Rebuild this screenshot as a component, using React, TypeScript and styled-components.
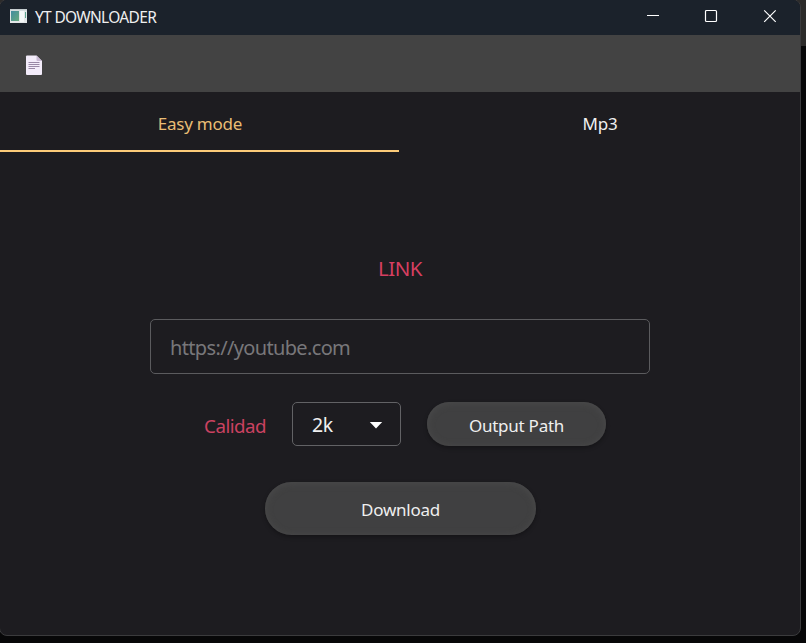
import React from 'react';
import styled, { createGlobalStyle } from 'styled-components';

const GlobalStyle = createGlobalStyle`
  * { box-sizing: border-box; }
  body {
    margin: 0;
    background: #070708;
    font-family: 'Noto Sans', 'Open Sans', sans-serif;
    overflow: hidden;
  }
`;

const Desktop = styled.div`
  width: 806px;
  height: 643px;
  overflow: hidden;
  background: linear-gradient(#2c2b2a 0 46px, #070708 46px);
`;

const Window = styled.main`
  width: 802px;
  height: 637px;
  margin: -1px 0 0 -1px;
  display: flex;
  flex-direction: column;
  overflow: hidden;
  background: #1d1c20;
  border: 1px solid #3b3b3d;
  border-radius: 8px;
`;

const Text = styled.span<{ $size: number; $spacing: number; $color?: string; $shift?: number }>`
  font-size: ${p => p.$size}px;
  letter-spacing: ${p => p.$spacing}px;
  color: ${p => p.$color ?? '#efefef'};
  line-height: 24px;
  white-space: nowrap;
  padding-top: ${p => p.$shift ?? 0}px;
`;

const TitleBar = styled.header`
  height: 35px;
  flex: none;
  display: flex;
  align-items: center;
  padding: 0 22px 3px 9px;
  background: #1b222b;
`;

const AppIcon = styled.svg`
  width: 19px;
  height: 16px;
  margin-right: 7px;
`;

const WindowControls = styled.div`
  display: flex;
  gap: 42px;
  margin-left: auto;
`;

const ControlIcon = styled.svg`
  width: 17px;
  height: 16px;
  fill: none;
  stroke: #fff;
`;

const Toolbar = styled.nav`
  height: 57px;
  flex: none;
  display: flex;
  align-items: center;
  padding: 3px 0 0 25px;
  background: #434343;
`;

const DocumentIcon = styled.svg`
  width: 18px;
  height: 21px;
`;

const Tabs = styled.div`
  display: grid;
  grid-template-columns: 399px 401px;
  height: 60px;
  flex: none;
`;

const Tab = styled.button<{ $active?: boolean }>`
  display: flex;
  align-items: center;
  justify-content: center;
  padding: 6px 0 0 1px;
  border: 0;
  border-bottom: 2px solid ${p => (p.$active ? '#fccb79' : 'transparent')};
  background: none;
  font-family: inherit;
`;

const Form = styled.section`
  display: flex;
  flex-direction: column;
  align-items: center;
  padding-top: 104px;
`;

const LinkInput = styled.input`
  width: 500px;
  height: 55px;
  margin-top: 39px;
  padding: 1px 19px 0;
  border: 1px solid #5b5b5e;
  border-radius: 5px;
  background: transparent;
  color: #f3f3f3;
  font-family: inherit;
  font-size: 20px;
  letter-spacing: -0.65px;
  &::placeholder { color: #78777a; opacity: 1; }
`;

const OptionsRow = styled.div`
  display: flex;
  align-items: center;
  justify-content: flex-end;
  width: 402px;
  height: 44px;
  margin: 28px 0 0 10px;
`;

const Select = styled.button`
  width: 109px;
  height: 44px;
  margin: 0 26px;
  padding: 1px 17px 0 19px;
  display: flex;
  align-items: center;
  justify-content: space-between;
  border: 1px solid #626265;
  border-radius: 5px;
  background: transparent;
  font-family: inherit;
`;

const Caret = styled.svg`
  width: 14px;
  height: 8px;
  fill: #fff;
`;

const PillButton = styled.button<{ $width: number; $height: number }>`
  width: ${p => p.$width}px;
  height: ${p => p.$height}px;
  display: flex;
  align-items: center;
  justify-content: center;
  padding: 0;
  border: 0;
  border-radius: 999px;
  background: #404041;
  box-shadow: inset 0 1px 7px #4b4b4c, 0 2px 4px rgba(0, 0, 0, 0.3);
  font-family: inherit;
`;

const DownloadRow = styled.div`
  margin: 36px 0 0 1px;
`;

export default function App() {
  return (
    <Desktop>
      <GlobalStyle />
      <Window>
        <TitleBar>
          <AppIcon viewBox="0 0 19 16">
            <defs>
              <linearGradient id="pane" x1="0" y1="0" x2="1" y2="1">
                <stop offset="0" stopColor="#438ba0" />
                <stop offset="1" stopColor="#67aa7d" />
              </linearGradient>
            </defs>
            <path d="M1 1h17v14H1z" fill="#e3e7e8" />
            <path d="M1 1h17v1.5H1z" fill="#c5cdd0" />
            <path d="M2 3h8v10H2z" fill="url(#pane)" />
            <path d="M11 3h4v11h-4z" fill="#f5f8f7" />
            <path d="M16 4h1v6h-1z" fill="#5aa28c" />
          </AppIcon>
          <Text $size={15.5} $spacing={-0.68} $shift={2}>YT DOWNLOADER</Text>
          <WindowControls>
            <ControlIcon viewBox="0 0 17 16"><path d="M4 7.5h12" /></ControlIcon>
            <ControlIcon viewBox="0 0 17 16"><rect x="3.5" y="2.5" width="11" height="11" rx="1" strokeWidth="1.2" /></ControlIcon>
            <ControlIcon viewBox="0 0 17 16"><path d="m3.2 2.3 11.5 11.5M14.7 2.3 3.2 13.8" strokeWidth="1.2" /></ControlIcon>
          </WindowControls>
        </TitleBar>
        <Toolbar>
          <DocumentIcon viewBox="0 0 18 21">
            <path d="M1 1.5q0-1 1-1h9.5L17 6v13q0 1-1 1H2q-1 0-1-1z" fill="#f3ecfa" />
            <path d="M11.5.5V5q0 1 1 1H17z" fill="#c9b9d4" />
            <path d="M3.5 7.5h11M3.5 9.5h11M3.5 11.5h11M3.5 13.5h6.5" stroke="#8f7d9c" strokeWidth=".9" />
          </DocumentIcon>
        </Toolbar>
        <Tabs>
          <Tab $active><Text $size={17} $spacing={-0.24} $color="#e9bd74">Easy mode</Text></Tab>
          <Tab><Text $size={17} $spacing={-0.15}>Mp3</Text></Tab>
        </Tabs>
        <Form>
          <Text $size={20.5} $spacing={-0.5} $color="#d63f61">LINK</Text>
          <LinkInput placeholder="https://youtube.com" />
          <OptionsRow>
            <Text $size={18.7} $spacing={-0.5} $color="#cb4261" $shift={3}>Calidad</Text>
            <Select>
              <Text $size={19.5} $spacing={-0.3}>2k</Text>
              <Caret viewBox="0 0 14 8"><path d="M.8 1h12.4L7 7.4z" /></Caret>
            </Select>
            <PillButton $width={179} $height={44}>
              <Text $size={17} $spacing={-0.25} $shift={3}>Output Path</Text>
            </PillButton>
          </OptionsRow>
          <DownloadRow>
            <PillButton $width={271} $height={53}>
              <Text $size={17} $spacing={-0.25} $shift={2}>Download</Text>
            </PillButton>
          </DownloadRow>
        </Form>
      </Window>
    </Desktop>
  );
}
